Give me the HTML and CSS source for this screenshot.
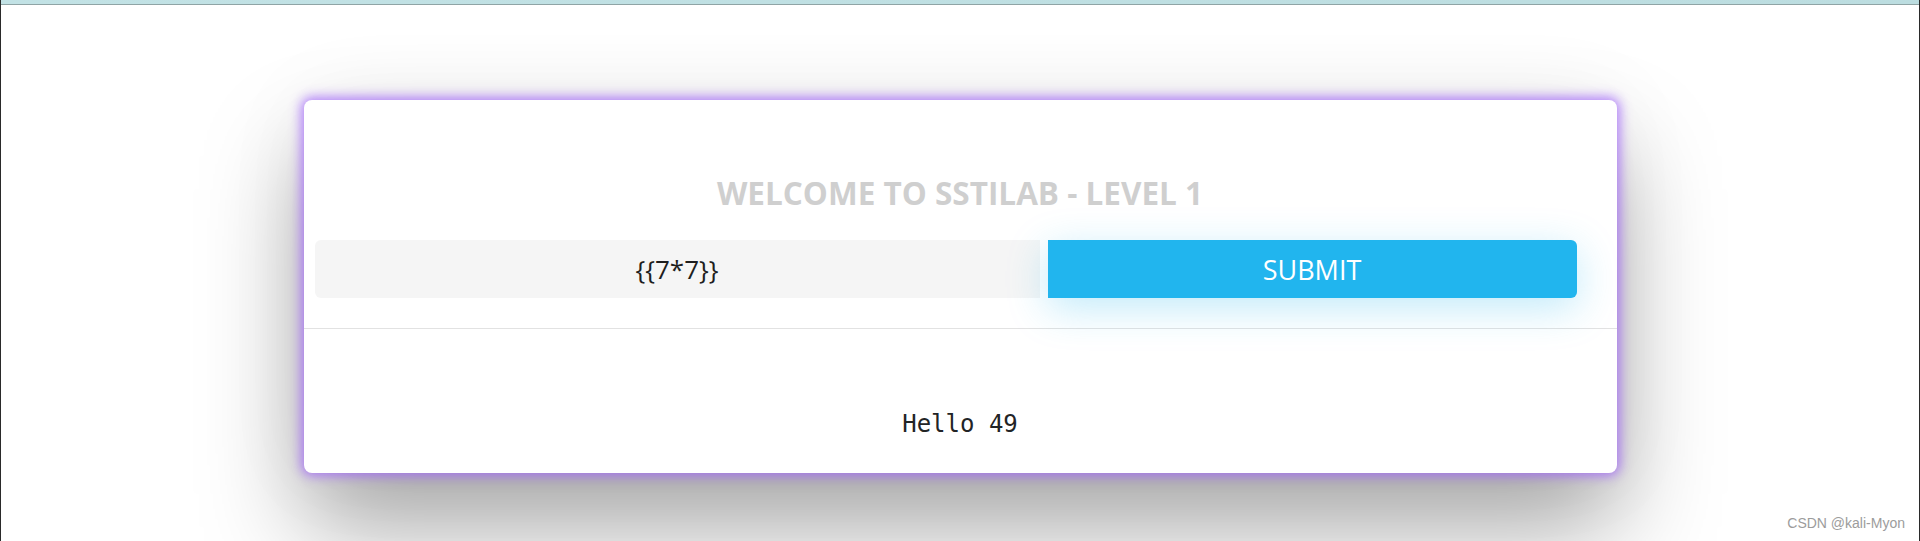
FILE: index.html
```html
<!DOCTYPE html>
<html lang="en">
<head>
<meta charset="utf-8">
<title>SSTILAB - Level 1</title>
<link rel="stylesheet" href="styles.css">
</head>
<body>
<div class="frame">
  <div class="topbar"></div>
  <main class="stage">
    <section class="card">
      <h1 class="title">WELCOME TO SSTILAB - LEVEL 1</h1>
      <form class="form">
        <input class="field" type="text" value="{{7*7}}">
        <button class="submit" type="button">SUBMIT</button>
      </form>
      <hr class="divider">
      <pre class="result">Hello 49</pre>
    </section>
  </main>
  <div class="watermark">CSDN @kali-Myon</div>
</div>
</body>
</html>
```
FILE: styles.css
```css
html, body {
  margin: 0;
  padding: 0;
  background: #ffffff;
}

.frame {
  position: relative;
  height: 541px;
  box-sizing: border-box;
  border-left: 1px solid #2a2a2a;
  border-right: 1px solid #2a2a2a;
  overflow: hidden;
  background: #ffffff;
}

.topbar {
  height: 4px;
  background: linear-gradient(90deg, #c2e2e5, #bcdde0);
  border-bottom: 1px solid #8fa4a5;
}

.stage {
  padding-top: 95px;
}

.card {
  width: 1313px;
  margin: 0 auto;
  background: #ffffff;
  border-radius: 8px;
  box-shadow:
    0 0 12px 3px rgba(160, 100, 250, 0.8),
    0 55px 100px rgba(0, 0, 0, 0.34),
    0 0 90px rgba(0, 0, 0, 0.06);
  padding: 71px 0 35px 0;
  box-sizing: border-box;
  height: 373px;
}

.title {
  margin: 0;
  font-family: "Open Sans", "Noto Sans", sans-serif;
  font-weight: 700;
  font-size: 31.5px;
  line-height: 44px;
  color: #cfcfcf;
  text-align: center;
}

.form {
  display: flex;
  gap: 8px;
  margin: 25px 40px 0 11px;
  height: 58px;
}

.field {
  width: 725px;
  flex: none;
  box-sizing: border-box;
  border: none;
  outline: none;
  border-radius: 6px 0 0 6px;
  background: #f5f5f5;
  font-family: "Open Sans", "Noto Sans", sans-serif;
  font-size: 26px;
  color: #1e1e1e;
  text-align: center;
  padding: 0;
  margin: 0;
  height: 58px;
}

.submit {
  flex: 1;
  border: none;
  margin: 0;
  padding: 0;
  border-radius: 0 6px 6px 0;
  background: #21b5ee;
  color: #ffffff;
  font-family: "Open Sans", "Noto Sans", sans-serif;
  font-size: 27px;
  height: 58px;
  box-shadow: 0 10px 40px rgba(33, 181, 238, 0.28);
}

.divider {
  margin: 30px 0 0 0;
  border: none;
  height: 1px;
  background: #e2e2e2;
}

.result {
  margin: 81px 0 0 0;
  font-family: "DejaVu Sans Mono", monospace;
  font-size: 24px;
  line-height: 28px;
  color: #222426;
  text-align: center;
}

.watermark {
  position: absolute;
  right: 14px;
  bottom: 10px;
  font-family: "Liberation Sans", Arial, sans-serif;
  font-size: 14px;
  color: #9c9c9c;
}
```
